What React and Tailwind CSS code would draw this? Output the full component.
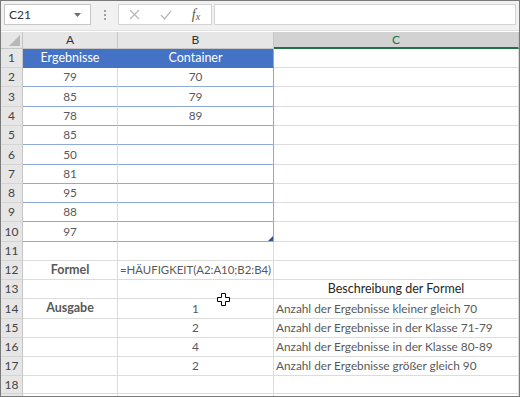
import React from "react";

const H = [19, 19, 20, 19, 19, 20, 19, 19, 19, 20, 19, 19, 19, 20, 19, 19, 19, 18];

const rows = [
  { a: "Ergebnisse", b: "Container" },
  { a: "79", b: "70" },
  { a: "85", b: "79" },
  { a: "78", b: "89" },
  { a: "85" },
  { a: "50" },
  { a: "81" },
  { a: "95" },
  { a: "88" },
  { a: "97" },
  {},
  { a: "Formel", b: "=HÄUFIGKEIT(A2:A10;B2:B4)" },
  { c: "Beschreibung der Formel" },
  { a: "Ausgabe", b: "1", c: "Anzahl der Ergebnisse kleiner gleich 70" },
  { b: "2", c: "Anzahl der Ergebnisse in der Klasse 71-79" },
  { b: "4", c: "Anzahl der Ergebnisse in der Klasse 80-89" },
  { b: "2", c: "Anzahl der Ergebnisse größer gleich 90" },
  {},
];

function Row({ i, r }) {
  const n = i + 1;
  const header = n === 1;
  const table = n >= 2 && n <= 10;
  const bold = n === 12 || n === 14;
  const h = H[i];
  return (
    <div className="flex shrink-0" style={{ height: h }}>
      <div className="w-[22px] shrink-0 flex items-center justify-center bg-[#e6e6e6] border-r border-b border-r-[#c6c6c6] border-b-[#d4d4d4] text-[12px] text-[#444]">
        {n}
      </div>
      <div
        className={
          "w-[95px] shrink-0 flex items-center justify-center border-r border-b " +
          (header
            ? "bg-[#4472c4] border-[#4472c4] text-white text-[12.5px]"
            : table
            ? "border-r-[#dcdcdc] border-b-[#8eaadb] text-[#595959]"
            : "border-[#dcdcdc] text-[#595959]") +
          (bold ? " font-bold text-[#262626] text-[12.5px]" : "")
        }
      >
        {r.a}
      </div>
      <div
        className={
          "relative w-[156px] shrink-0 flex items-center border-r border-b whitespace-nowrap overflow-hidden " +
          (n === 12 ? "justify-start pl-[2px] text-[11.4px] " : "justify-center ") +
          (header
            ? "bg-[#4472c4] border-r-[#8eaadb] border-b-[#4472c4] text-white text-[12.5px]"
            : table
            ? "border-[#8eaadb] text-[#595959]"
            : "border-[#dcdcdc] text-[#595959]")
        }
      >
        {r.b}
        {n === 10 && (
          <div className="absolute right-0 bottom-0 w-0 h-0 border-l-[5px] border-l-transparent border-b-[5px] border-b-[#2f5597]" />
        )}
      </div>
      <div
        className={
          "flex-1 flex items-center border-r border-b border-[#dcdcdc] whitespace-nowrap overflow-hidden " +
          (n === 13 ? "justify-center text-[#262626] text-[12.5px]" : "pl-[2px] text-[#595959]")
        }
      >
        {r.c}
      </div>
    </div>
  );
}

export default function App() {
  return (
    <div className="w-[520px] h-[397px] overflow-hidden border border-[#7a7a7a] bg-white flex flex-col font-[family-name:Lato,sans-serif] text-[11.8px] relative">
      {/* toolbar */}
      <div className="h-[30px] shrink-0 bg-[#f1f1f1] flex items-start pt-[3px] border-b border-[#e0e0e0]">
        <div className="ml-[3px] w-[87px] h-[21px] bg-white border border-[#c6c6c6] flex items-center pl-[4px] pr-[9px] justify-between text-[12px] text-[#333]">
          <span>C21</span>
          <svg width="7" height="4" viewBox="0 0 7 4"><path d="M0 0H7L3.5 4Z" fill="#707070" /></svg>
        </div>
        <div className="w-[27px] h-[21px] flex flex-col items-center justify-center gap-[2px]">
          <div className="w-[2px] h-[2px] bg-[#a0a0a0]" />
          <div className="w-[2px] h-[2px] bg-[#a0a0a0]" />
          <div className="w-[2px] h-[2px] bg-[#a0a0a0]" />
        </div>
        <div className="w-[94px] h-[21px] bg-white border border-[#d4d4d4] flex items-center">
          <div className="w-[31px] flex justify-center">
            <svg width="11" height="11" viewBox="0 0 11 11"><path d="M1 1L10 10M10 1L1 10" stroke="#b8b8b8" strokeWidth="1.2" /></svg>
          </div>
          <div className="w-[31px] flex justify-center">
            <svg width="12" height="10" viewBox="0 0 12 10"><path d="M1 5L4.5 9L11 1" stroke="#b8b8b8" strokeWidth="1.2" fill="none" /></svg>
          </div>
          <div className="w-[30px] flex justify-center items-start text-[#555] italic font-[family-name:'Liberation_Serif',serif] leading-none">
            <span className="text-[14px]">f</span>
            <span className="text-[10px] relative top-[4px]">x</span>
          </div>
        </div>
        <div className="ml-[2px] flex-1 mr-[3px] h-[21px] bg-white border border-[#d4d4d4]" />
      </div>
      {/* column headers */}
      <div className="flex h-[17px] shrink-0 mt-[1px]">
        <div className="w-[22px] shrink-0 bg-[#e6e6e6] border-r border-b border-[#c6c6c6] relative">
          <div className="absolute right-[2px] bottom-[2px] w-0 h-0 border-l-[11px] border-l-transparent border-b-[11px] border-b-[#b8b8b8]" />
        </div>
        <div className="w-[95px] shrink-0 bg-[#e6e6e6] border-r border-b border-r-[#c6c6c6] border-b-[#c6c6c6] flex items-center justify-center text-[12px] text-[#333]">A</div>
        <div className="w-[156px] shrink-0 bg-[#e6e6e6] border-r border-b border-[#c6c6c6] flex items-center justify-center text-[12px] text-[#333]">B</div>
        <div className="flex-1 bg-[#d2d2d2] border-r border-[#c6c6c6] border-b-2 border-b-[#217346] flex items-center justify-center text-[12px] text-[#217346]">C</div>
      </div>
      {rows.map((r, i) => (
        <Row key={i} i={i} r={r} />
      ))}
      <div className="flex flex-1">
        <div className="w-[22px] shrink-0 bg-[#e6e6e6] border-r border-[#c6c6c6]" />
        <div className="w-[95px] shrink-0 border-r border-[#dcdcdc]" />
        <div className="w-[156px] shrink-0 border-r border-[#dcdcdc]" />
        <div className="flex-1 border-r border-[#dcdcdc]" />
      </div>
      {/* cursor */}
      <svg className="absolute left-[216px] top-[292px]" width="13" height="13" viewBox="0 0 13 13">
        <path d="M4.5 0.5H8.5V4.5H12.5V8.5H8.5V12.5H4.5V8.5H0.5V4.5H4.5Z" fill="white" stroke="black" strokeWidth="1" />
      </svg>
    </div>
  );
}
